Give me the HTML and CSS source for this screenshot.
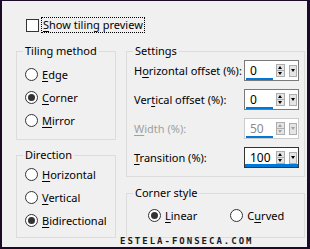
FILE: index.html
```html
<!DOCTYPE html>
<html>
<head>
<meta charset="utf-8">
<link rel="stylesheet" href="styles.css">
</head>
<body>
<div class="frame">
  <div class="preview">
    <span class="check"></span>
    <span class="focus"><u>S</u>how tiling preview</span>
  </div>
  <div class="columns">
    <div class="col left">
      <fieldset class="group tiling">
        <legend>Tiling method</legend>
        <div class="radios">
          <div class="radio"><span class="dot"></span><span><u>E</u>dge</span></div>
          <div class="radio"><span class="dot on"></span><span><u>C</u>orner</span></div>
          <div class="radio"><span class="dot"></span><span><u>M</u>irror</span></div>
        </div>
      </fieldset>
      <fieldset class="group direction">
        <legend>Direction</legend>
        <div class="radios">
          <div class="radio"><span class="dot"></span><span><u>H</u>orizontal</span></div>
          <div class="radio"><span class="dot"></span><span><u>V</u>ertical</span></div>
          <div class="radio"><span class="dot on"></span><span><u>B</u>idirectional</span></div>
        </div>
      </fieldset>
    </div>
    <div class="col right">
      <fieldset class="group settings">
        <legend>Settings</legend>
        <div class="rows">
          <div class="row"><span class="lbl">H<u>o</u>rizontal offset (%):</span>
            <span class="spin"><span class="val">0</span><span class="bar"></span><span class="ud"><span class="b up"></span><span class="b down"></span></span><span class="dd"></span></span></div>
          <div class="row"><span class="lbl">Ver<u>t</u>ical offset (%):</span>
            <span class="spin"><span class="val">0</span><span class="bar"></span><span class="ud"><span class="b up"></span><span class="b down"></span></span><span class="dd"></span></span></div>
          <div class="row disabled"><span class="lbl"><u>W</u>idth (%):</span>
            <span class="spin"><span class="val">50</span><span class="bar"></span><span class="ud"><span class="b up"></span><span class="b down"></span></span><span class="dd"></span></span></div>
          <div class="row"><span class="lbl"><u>T</u>ransition (%):</span>
            <span class="spin focused"><span class="val">100</span><span class="bar"></span><span class="ud"><span class="b up"></span><span class="b down"></span></span><span class="dd"></span></span></div>
        </div>
      </fieldset>
      <fieldset class="group corner">
        <legend>Corner style</legend>
        <div class="hradios">
          <div class="radio"><span class="dot on"></span><span><u>L</u>inear</span></div>
          <div class="radio"><span class="dot"></span><span>C<u>u</u>rved</span></div>
        </div>
      </fieldset>
    </div>
  </div>
  <div class="watermark">ESTELA-FONSECA.COM</div>
</div>
</body>
</html>
```
FILE: styles.css
```css
* { box-sizing: border-box; }
html, body { margin: 0; padding: 0; }
body {
  width: 310px;
  height: 249px;
  overflow: hidden;
  background: #1b0b28;
  font-family: "Noto Sans", "Open Sans", sans-serif;
  font-size: 11px;
  color: #000;
}
u { text-decoration: underline; text-underline-offset: 2px; }
.frame {
  position: relative;
  width: 310px;
  height: 249px;
  border-style: solid;
  border-color: #1b0b28;
  border-width: 1px 3px 2px 2px;
  background: #f0f0f0;
}
.preview {
  display: flex;
  align-items: center;
  height: 16px;
  margin: 16px 0 0 24px;
}
.check {
  width: 13px;
  height: 13px;
  border: 1px solid #333;
  background: #fff;
  margin-right: 2px;
}
.focus {
  height: 16px;
  line-height: 14px;
  padding: 0 1px;
  border: 1px dotted #000;
}
.columns {
  display: flex;
  gap: 10px;
  margin: 10px 0 0 14px;
}
.col { display: flex; flex-direction: column; }
.left { width: 100px; gap: 7px; }
.right { width: 179px; gap: 8px; }
.group {
  margin: 0;
  min-width: 0;
  border: 1px solid #dcdcdc;
  padding: 0 0 0 6px;
}
.group legend {
  padding: 0 2px;
  line-height: 16px;
  height: 16px;
}
.tiling { padding-top: 4px; padding-bottom: 7px; }
.direction { padding-top: 0; padding-bottom: 5px; }
.settings { padding-top: 1px; padding-bottom: 8px; }
.corner { padding-top: 3px; padding-bottom: 10px; }
.radios { margin-left: 2px; display: flex; flex-direction: column; }
.radio {
  display: flex;
  align-items: center;
  gap: 4px;
  height: 23px;
}
.dot {
  position: relative;
  width: 13px;
  height: 13px;
  border: 1px solid #333;
  border-radius: 50%;
  background: #fff;
  flex: none;
}
.dot.on::after {
  content: "";
  position: absolute;
  left: 2px;
  top: 2px;
  width: 7px;
  height: 7px;
  border-radius: 50%;
  background: #333;
}
.hradios {
  display: flex;
  gap: 33px;
  margin-left: 15px;
}
.rows {
  display: flex;
  flex-direction: column;
  gap: 8px;
  margin-left: 1px;
}
.row {
  display: flex;
  align-items: center;
  height: 21px;
}
.lbl { width: 110px; white-space: nowrap; }
.disabled .lbl { color: #a0a0a0; }
.spin {
  position: relative;
  display: block;
  width: 55px;
  height: 21px;
  border: 1px solid #7a7a7a;
  background: #fff;
}
.disabled .spin { border-color: #cccccc; }
.val {
  position: absolute;
  left: 5px;
  top: 2px;
  line-height: 16px;
  font-size: 12px;
}
.disabled .val { color: #8a8a8a; }
.bar {
  position: absolute;
  left: 1px;
  bottom: 0;
  width: 27px;
  height: 2px;
  background: #0078d7;
}
.focused { border-color: #333; }
.focused .bar { left: 0; width: 53px; height: 3px; }
.ud {
  position: absolute;
  left: 31px;
  top: 3px;
  display: flex;
  flex-direction: column;
}
.b {
  position: relative;
  width: 9px;
  height: 7px;
  border: 1px solid #adadad;
  background: #e5e5e5;
}
.b.down { margin-top: -1px; }
.b::after {
  content: "";
  position: absolute;
  left: 1px;
  width: 0;
  height: 0;
  border-left: 2.5px solid transparent;
  border-right: 2.5px solid transparent;
}
.b.up::after { top: 1px; border-bottom: 3px solid #000; }
.b.down::after { top: 1px; border-top: 3px solid #000; }
.disabled .b.up::after { border-bottom-color: #a0a0a0; }
.disabled .b.down::after { border-top-color: #a0a0a0; }
.dd {
  position: absolute;
  left: 44px;
  top: 4px;
  width: 8px;
  height: 12px;
  border: 1px solid #adadad;
  background: #e5e5e5;
}
.dd::after {
  content: "";
  position: absolute;
  left: 1px;
  top: 3px;
  border-left: 2.5px solid transparent;
  border-right: 2.5px solid transparent;
  border-top: 3px solid #000;
}
.disabled .dd::after { border-top-color: #a0a0a0; }
.watermark {
  position: absolute;
  left: 118px;
  top: 235px;
  font-family: "DejaVu Sans Mono", monospace;
  font-weight: bold;
  font-size: 9px;
  letter-spacing: 2px;
  color: #1a1a1a;
  line-height: 10px;
}
```
